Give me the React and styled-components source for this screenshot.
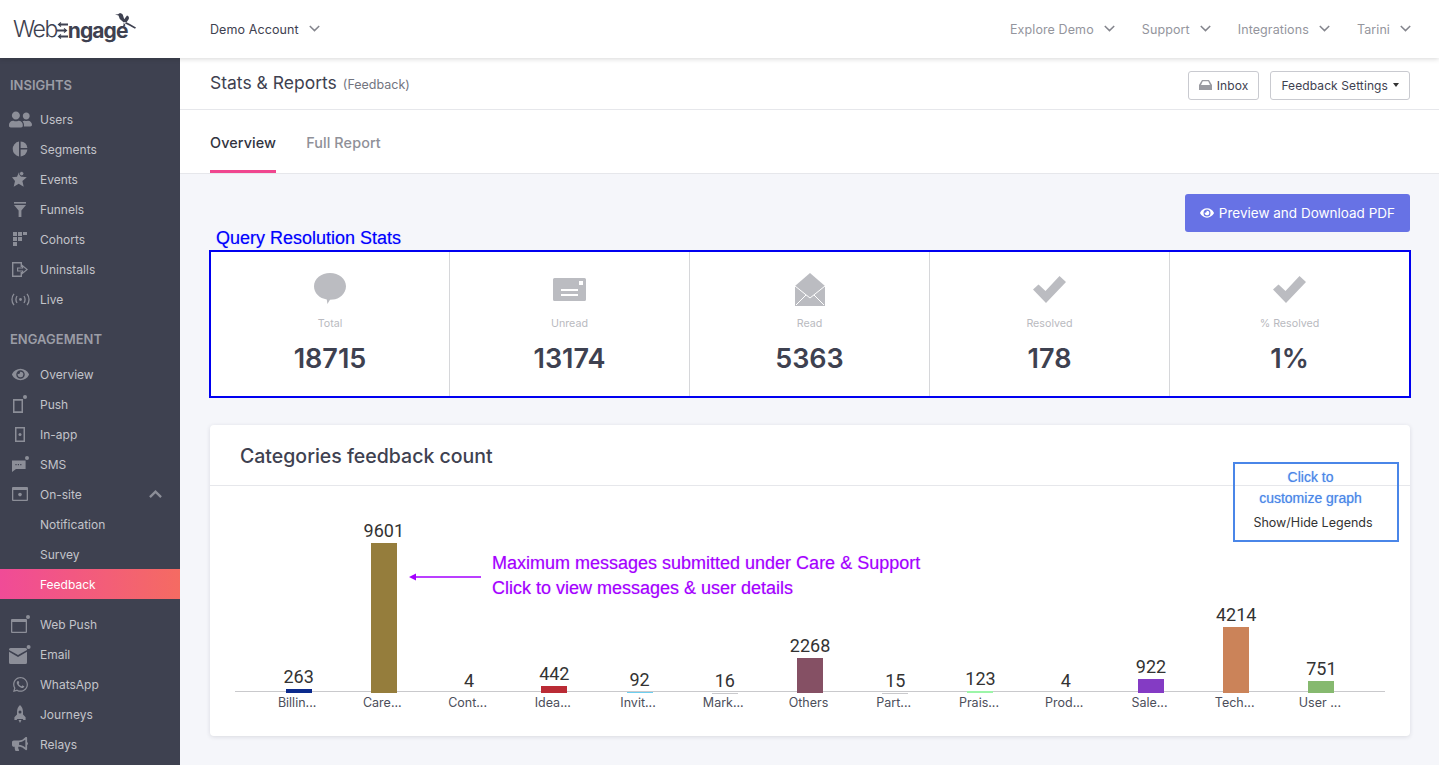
import React from 'react';
import styled, { createGlobalStyle } from 'styled-components';
import { FaUserFriends, FaEye, FaWhatsapp, FaBullhorn } from 'react-icons/fa';

const GlobalStyle = createGlobalStyle`
  html, body { margin: 0; padding: 0; height: 100%; overflow: hidden; }
  body { font-family: Inter, "Liberation Sans", sans-serif; background: #f5f6fa; color: #3e4150; }
  * { box-sizing: border-box; }
`;

const Page = styled.div`
  display: flex;
  flex-direction: column;
  height: 100vh;
`;

const TopBar = styled.header`
  display: flex;
  align-items: center;
  flex: 0 0 58px;
  padding-right: 28px;
  background: #fff;
  box-shadow: 0 1px 5px rgba(0, 0, 0, 0.16);
  position: relative;
  z-index: 2;
`;

const LogoBox = styled.div`
  display: flex;
  align-items: center;
  flex: 0 0 210px;
  height: 58px;
  padding-left: 13px;
  position: relative;
  color: #3e4150;
`;

const LogoLight = styled.span`
  font-size: 23px;
  font-weight: 300;
  letter-spacing: -1.5px;
`;

const LogoBold = styled.span`
  font-size: 21px;
  font-weight: 700;
  letter-spacing: -0.9px;
  margin-top: 2px;
`;

const LogoMark = styled.svg`
  margin: 3px 0 0 0;
`;

const Bird = styled.svg`
  position: absolute;
  left: 115px;
  top: 13px;
`;

const TopLink = styled.div`
  display: flex;
  align-items: center;
  gap: 10px;
  font-size: 12.5px;
  letter-spacing: 0.1px;
  color: ${p => (p.$muted ? '#94959d' : '#3e4150')};
  margin-left: ${p => p.$left};
`;

const Body = styled.div`
  display: flex;
  flex: 1;
  min-height: 0;
`;

const Sidebar = styled.nav`
  flex: 0 0 180px;
  background: #3e4150;
  overflow: hidden;
`;

const SectionTitle = styled.div`
  padding: ${p => p.$top}px 0 ${p => p.$bottom}px 10px;
  font-size: 13px;
  line-height: 18px;
  font-weight: 600;
  color: #9b9da6;
`;

const NavRow = styled.div`
  display: flex;
  align-items: center;
  height: 30px;
  padding-right: 18px;
  margin-top: ${p => (p.$spaced ? '10px' : '0')};
  font-size: 12px;
  color: ${p => (p.$active ? '#fff' : '#c3c4ca')};
  background: ${p => (p.$active ? 'linear-gradient(90deg, #f04b97, #f56b62)' : 'transparent')};
`;

const IconSlot = styled.span`
  display: flex;
  align-items: center;
  justify-content: center;
  flex: 0 0 40px;
  color: #8c8e98;
`;

const RowArrow = styled.span`
  display: flex;
  margin-left: auto;
  color: #8c8e98;
`;

const Main = styled.main`
  flex: 1;
  min-width: 0;
  display: flex;
  flex-direction: column;
`;

const TitleBar = styled.div`
  display: flex;
  align-items: center;
  justify-content: space-between;
  height: 52px;
  padding: 0 29px 0 30px;
  background: #fff;
  border-bottom: 1px solid #e6e7eb;
`;

const Title = styled.h1`
  margin: 0 0 3px;
  font-size: 17.5px;
  font-weight: 400;
  color: #3e4150;
`;

const TitleNote = styled.span`
  margin-left: 6px;
  font-size: 12.5px;
  color: #73757f;
`;

const ButtonGroup = styled.div`
  display: flex;
  gap: 11px;
  margin-top: 3px;
`;

const OutlineButton = styled.button`
  display: flex;
  align-items: center;
  gap: 5px;
  height: 29px;
  padding: 0 10px;
  background: #fff;
  border: 1px solid #c9cad0;
  border-radius: 3px;
  font: 12px Inter, sans-serif;
  letter-spacing: 0.1px;
  color: #3e4150;
`;

const Tabs = styled.div`
  display: flex;
  gap: 30px;
  height: 64px;
  padding-left: 30px;
  background: #fff;
  border-bottom: 1px solid #e6e7eb;
`;

const Tab = styled.div`
  display: flex;
  align-items: center;
  height: 63px;
  padding-top: 5px;
  font-size: 14.4px;
  font-weight: 500;
  letter-spacing: 0.1px;
  color: ${p => (p.$active ? '#32343f' : '#8f9098')};
  border-bottom: 3px solid ${p => (p.$active ? '#f0468f' : 'transparent')};
`;

const Content = styled.div`
  padding: 20px 29px 0 30px;
`;

const StatsHead = styled.div`
  display: flex;
  justify-content: space-between;
  height: 56px;
`;

const StatsNote = styled.div`
  align-self: flex-end;
  padding-left: 6px;
  font: 18px/23px "Liberation Sans", Arial, sans-serif;
  color: #0000ff;
  text-shadow: 0 0 1px rgba(0, 0, 255, 0.35);
`;

const PrimaryButton = styled.button`
  display: flex;
  align-items: center;
  gap: 5px;
  height: 38px;
  padding: 0 15px;
  background: #6772e5;
  border: 0;
  border-radius: 3px;
  font: 13.5px Inter, sans-serif;
  color: #fff;
`;

const StatsBox = styled.div`
  display: grid;
  grid-template-columns: 238px repeat(4, 240px);
  height: 148px;
  margin: 0 -1px;
  background: #fff;
  border: 2px solid #0000f0;
`;

const StatCell = styled.div`
  display: flex;
  flex-direction: column;
  align-items: center;
  border-left: ${p => (p.$first ? '0' : '1px solid #d6d7da')};
`;

const StatIcon = styled.div`
  display: flex;
  align-items: center;
  justify-content: center;
  height: 36px;
  margin-top: 19px;
  color: #bbbcc1;
`;

const StatLabel = styled.div`
  margin-top: 10px;
  font-size: 10.7px;
  line-height: 14px;
  color: #b9bac0;
`;

const StatValue = styled.div`
  margin-top: 12px;
  font-size: 27px;
  line-height: 32px;
  font-weight: 600;
  color: #3e4150;
`;

const ChartCard = styled.section`
  position: relative;
  margin-top: 27px;
  padding-bottom: 23px;
  background: #fff;
  border-radius: 4px;
  box-shadow: 0 1px 4px rgba(50, 50, 70, 0.14);
`;

const ChartTitle = styled.h2`
  margin: 0;
  height: 61px;
  padding: 2px 30px 0;
  display: flex;
  align-items: center;
  font-size: 19.5px;
  font-weight: 500;
  color: #3e4150;
  border-bottom: 1px solid #e6e7eb;
`;

const Plot = styled.div`
  position: relative;
  display: flex;
  align-items: flex-end;
  height: 227px;
  margin: 0 46px;
  &::after {
    content: '';
    position: absolute;
    left: -21px;
    right: -21px;
    bottom: 21px;
    height: 1px;
    background: #c9c9cc;
  }
`;

const Column = styled.div`
  flex: 1;
  min-width: 0;
  display: flex;
  flex-direction: column;
  align-items: center;
`;

const BarValue = styled.div`
  margin-bottom: 1px;
  font: 18px/22px Roboto, "Liberation Sans", Arial, sans-serif;
  color: #333;
`;

const Bar = styled.div`
  position: relative;
  z-index: 1;
  width: 26px;
  background: ${p => p.$color};
`;

const BarLabel = styled.div`
  height: 20px;
  padding-right: 3px;
  font-size: 12.5px;
  line-height: 20px;
  color: #4c4e5a;
  white-space: nowrap;
`;

const ArrowNote = styled.svg`
  position: absolute;
  left: 199px;
  top: 147px;
`;

const PurpleNote = styled.div`
  position: absolute;
  left: 282px;
  top: 126px;
  font: 18px/25px "Liberation Sans", Arial, sans-serif;
  color: #a400ff;
  text-shadow: 0 0 1px rgba(164, 0, 255, 0.4);
  white-space: nowrap;
`;

const GraphNote = styled.div`
  position: absolute;
  left: 1023px;
  top: 37px;
  width: 166px;
  height: 80px;
  padding-top: 3px;
  display: flex;
  flex-direction: column;
  align-items: center;
  border: 2px solid #4a86e8;
`;

const GraphNoteLine = styled.div`
  padding-right: 11px;
  font: 14px/21px "Liberation Sans", Arial, sans-serif;
  color: #4a86e8;
  text-shadow: 0 0 1px rgba(74, 134, 232, 0.6);
`;

const LegendToggle = styled.div`
  margin-top: 4px;
  padding-right: 6px;
  font-size: 12.5px;
  line-height: 20px;
  color: #333;
`;

const Chevron = ({ color = '#84858d', up, size = 11 }) => (
  <svg width={size} height={size * 0.64} viewBox="0 0 11 7" fill="none" stroke={color} strokeWidth={up ? 2 : 1.5}>
    <path d={up ? 'M.8 6 5.5 1.4 10.2 6' : 'M.8 1 5.5 5.6 10.2 1'} />
  </svg>
);

const Ico = ({ w, h, children }) => (
  <svg width={w} height={h} viewBox={`0 0 ${w} ${h}`} fill="currentColor">{children}</svg>
);

const icons = {
  users: <FaUserFriends size={23} />,
  segments: (
    <Ico w={16} h={16}>
      <path d="M7 .6v14.8A7.5 7.5 0 0 1 7 .6Z" />
      <path d="M8.6.6A7.4 7.4 0 0 1 15.4 7H8.6Z" />
      <path d="M8.6 8.6h6.8a7.4 7.4 0 0 1-6.8 6.8Z" />
    </Ico>
  ),
  events: (
    <Ico w={16} h={16}>
      <path d="M6.8 1.6 8.8 5.6l6 .6-4.4 3.9 1.3 5.6-5-3-5 3 1.3-5.6L0 6.2l5-.5Z" />
      <circle cx="9.6" cy="2.6" r="2.2" stroke="#3e4150" strokeWidth=".8" />
    </Ico>
  ),
  funnels: (
    <Ico w={14} h={15}>
      <path d="M1 0h12v1.6H1Z" />
      <path d="M1 3h12L8.4 8.6V15H5.6V8.6Z" />
    </Ico>
  ),
  cohorts: (
    <Ico w={15} h={15}>
      <path d="M0 0h4v4H0ZM5 0h4v4H5ZM10 0h4v3h-4ZM0 5h4v4H0ZM5 5h4v4H5ZM0 10h4v4H0Z" />
    </Ico>
  ),
  uninstalls: (
    <Ico w={16} h={15}>
      <path fillRule="evenodd" d="M0 0h10v5H8.6V1.4H1.4v12.2h7.2V10H10v5H0Z" />
      <path d="M10 2.6 16 7.5 10 12.4V9.6H5V5.4h5Zm1.2 2.6v1.4H6.2v1.8h5v1.6l3-2.5-3-2.5Z" fillRule="evenodd" />
    </Ico>
  ),
  live: (
    <svg width="19" height="13" viewBox="0 0 19 13" fill="none" stroke="currentColor" strokeWidth="1.3">
      <path d="M3 .8C.3 4 .3 9 3 12.2M6 3C4.8 5 4.8 8 6 10M13 3c1.2 2 1.2 5 0 7M16 .8c2.7 3.2 2.7 8.2 0 11.4" />
      <circle cx="9.5" cy="6.5" r="1.4" fill="currentColor" stroke="none" />
    </svg>
  ),
  overview: <FaEye size={17} />,
  push: (
    <Ico w={16} h={18}>
      <path fillRule="evenodd" d="M1 4h10v14H1Zm1.5 1.7v10.6h7V5.7Z" />
      <circle cx="13" cy="2" r="2" />
    </Ico>
  ),
  inapp: (
    <Ico w={10} h={15}>
      <path fillRule="evenodd" d="M0 0h10v15H0Zm1.5 1.6v11.8h7V1.6Z" />
      <circle cx="5" cy="7.5" r="1.5" />
    </Ico>
  ),
  sms: (
    <Ico w={17} h={16}>
      <path fillRule="evenodd" d="M0 4.5h13.6v8.6H4L0 16ZM3.4 8h1.2v1.2H3.4Zm2.4 0H7v1.2H5.8Zm2.4 0h1.2v1.2H8.2Z" />
      <circle cx="15" cy="2" r="2" />
    </Ico>
  ),
  onsite: (
    <Ico w={16} h={14}>
      <path fillRule="evenodd" d="M1 0h14a1 1 0 0 1 1 1v12a1 1 0 0 1-1 1H1a1 1 0 0 1-1-1V1a1 1 0 0 1 1-1Zm.3 3v9.7h13.4V3Z" />
      <circle cx="8" cy="7.6" r="1.8" />
    </Ico>
  ),
  webpush: (
    <Ico w={19} h={18}>
      <path fillRule="evenodd" d="M1 4h14a1 1 0 0 1 1 1v12a1 1 0 0 1-1 1H1a1 1 0 0 1-1-1V5a1 1 0 0 1 1-1Zm.3 3v9.7h13.4V7Z" />
      <circle cx="17" cy="2" r="2" />
    </Ico>
  ),
  email: (
    <svg width="22" height="19" viewBox="0 0 22 19" fill="currentColor">
      <path d="M1.5 3h15A1.5 1.5 0 0 1 18 4.5v.4L9 10 0 4.900v-.4A1.5 1.5 0 0 1 1.5 3Z" />
      <path d="M0 6.800 9 12l9-5.200v10.700a1.5 1.5 0 0 1-1.500 1.500h-15A1.500 1.500 0 0 1 0 17.500Z" />
      <circle cx="19.6" cy="2" r="2" />
    </svg>
  ),
  whatsapp: <FaWhatsapp size={17} />,
  journeys: (
    <Ico w={12} h={18}>
      <path fillRule="evenodd" d="M6 0c2 1.600 3 4.200 3 7.200v2.400l2.600 2.600V15H9.300l-.6-1H3.300l-.6 1H.4v-2.800L3 9.600V7.200C3 4.200 4 1.600 6 0Zm0 5.400a1.500 1.500 0 1 0 0 3 1.500 1.500 0 0 0 0-3Z" />
      <path d="M4.500 15h3L6 18Z" />
    </Ico>
  ),
  relays: <FaBullhorn size={16} />
};

const insights = [
  ['users', 'Users'],
  ['segments', 'Segments'],
  ['events', 'Events'],
  ['funnels', 'Funnels'],
  ['cohorts', 'Cohorts'],
  ['uninstalls', 'Uninstalls'],
  ['live', 'Live']
];

const engagement = [
  ['overview', 'Overview'],
  ['push', 'Push'],
  ['inapp', 'In-app'],
  ['sms', 'SMS']
];

const channels = [
  ['webpush', 'Web Push'],
  ['email', 'Email'],
  ['whatsapp', 'WhatsApp'],
  ['journeys', 'Journeys'],
  ['relays', 'Relays']
];

function CheckMark() {
  return (
    <svg width="33" height="27" viewBox="0 0 33 27" fill="currentColor">
      <path d="M0 13.500 5.500 8.500 12.500 15 26.500 0 33 6 13 27Z" />
    </svg>
  );
}

const stats = [
  {
    label: 'Total',
    value: '18715',
    icon: (
      <svg width="32" height="32" viewBox="0 0 32 32" fill="currentColor">
        <path d="M16 0c8.800 0 16 5.800 16 13.200S24.800 26.400 19 26.600l-3 .1-2.600 4.300-.6-4.600C5.600 25.400 0 20 0 13.200 0 5.800 7.200 0 16 0Z" />
      </svg>
    )
  },
  {
    label: 'Unread',
    value: '13174',
    icon: (
      <svg width="33" height="23" viewBox="0 0 33 23" fill="currentColor">
        <path fillRule="evenodd" d="M1.500 0h30A1.500 1.500 0 0 1 33 1.500v20a1.500 1.500 0 0 1-1.500 1.500h-30A1.500 1.500 0 0 1 0 21.500v-20A1.500 1.500 0 0 1 1.500 0ZM26 3v4h4V3ZM8 11v2h17v-2Zm0 5v2h17v-2Z" />
      </svg>
    )
  },
  {
    label: 'Read',
    value: '5363',
    icon: (
      <svg width="30" height="33" viewBox="0 0 30 33">
        <path d="M15 0 30 13V33H0V13Z" fill="currentColor" />
        <path d="M0 13 15 25 30 13M1 32 11 22M29 32 19 22" fill="none" stroke="#fff" strokeWidth="1" />
      </svg>
    )
  },
  { label: 'Resolved', value: '178', icon: <CheckMark /> },
  { label: '% Resolved', value: '1%', icon: <CheckMark /> }
];

const bars = [
  ['Billin...', 263, '#0b2a8c'],
  ['Care...', 9601, '#957d3c'],
  ['Cont...', 4, '#c9c9cc'],
  ['Idea...', 442, '#ba2b35'],
  ['Invit...', 92, '#6dcff0'],
  ['Mark...', 16, '#c9c9cc'],
  ['Others', 2268, '#855064'],
  ['Part...', 15, '#c9c9cc'],
  ['Prais...', 123, '#9cf5a8'],
  ['Prod...', 4, '#c9c9cc'],
  ['Sale...', 922, '#843bc4'],
  ['Tech...', 4214, '#cb8359'],
  ['User ...', 751, '#86b96f']
];

const topLinks = ['Explore Demo', 'Support', 'Integrations', 'Tarini'];

const Logo = () => (
  <LogoBox>
    <LogoLight>Web</LogoLight>
    <LogoMark width="11" height="17" viewBox="0 0 11 17" fill="none" stroke="#3e4150" strokeWidth="1.8">
      <path d="M2 2.500h9M0 8.500h9M2 14.500h9" />
      <path d="M4 .5 1.500 2.500 4 4.500M7 6.500l2.500 2L7 10.500M4 12.500l-2.500 2 2.500 2" strokeWidth="1.200" />
    </LogoMark>
    <LogoBold>ngage</LogoBold>
    <Bird width="21" height="18" viewBox="0 0 21 18" fill="#3e4150">
      <path d="M0 1.500 3 1.200 5 0c2 .3 3 1.500 3.200 3l1 3.200L12 2.500c1.600.4 2.300 1.800 1.800 3.500l-2 3-3.300.3L4.800 6 3.500 2.500Z" />
      <path d="M11 9 15 11l6 3.600-1 1.200-5.400-3-4.600-2.300Z" />
      <path d="M8.500 9.500c.6 2-.3 4-2.400 5l-1.800.8 3.400-.1L10.500 12Z" />
    </Bird>
  </LogoBox>
);

const SideItem = ({ icon, label, spaced }) => (
  <NavRow $spaced={spaced}>
    <IconSlot>{icons[icon]}</IconSlot>
    {label}
  </NavRow>
);

export default function App() {
  return (
    <Page>
      <GlobalStyle />
      <TopBar>
        <Logo />
        <TopLink $left="0">Demo Account <Chevron /></TopLink>
        {topLinks.map((l, i) => (
          <TopLink key={l} $muted $left={i === 0 ? 'auto' : '27px'}>{l} <Chevron /></TopLink>
        ))}
      </TopBar>
      <Body>
        <Sidebar>
          <SectionTitle $top={18} $bottom={10}>INSIGHTS</SectionTitle>
          {insights.map(([icon, label]) => <SideItem key={label} icon={icon} label={label} />)}
          <SectionTitle $top={16} $bottom={11}>ENGAGEMENT</SectionTitle>
          {engagement.map(([icon, label]) => <SideItem key={label} icon={icon} label={label} />)}
          <NavRow>
            <IconSlot>{icons.onsite}</IconSlot>
            On-site
            <RowArrow><Chevron up size={13} color="#8c8e98" /></RowArrow>
          </NavRow>
          <NavRow><IconSlot />Notification</NavRow>
          <NavRow><IconSlot />Survey</NavRow>
          <NavRow $active><IconSlot />Feedback</NavRow>
          {channels.map(([icon, label], i) => (
            <SideItem key={label} icon={icon} label={label} spaced={i === 0} />
          ))}
        </Sidebar>
        <Main>
          <TitleBar>
            <Title>Stats &amp; Reports<TitleNote>(Feedback)</TitleNote></Title>
            <ButtonGroup>
              <OutlineButton>
                <svg width="13" height="10" viewBox="0 0 13 10" fill="#9a9ba1">
                  <path d="M3 0h7l3 5v5H0V5Zm.8 1.300L2 5h9L9.200 1.300Z" fillRule="evenodd" />
                </svg>
                Inbox
              </OutlineButton>
              <OutlineButton>
                Feedback Settings
                <svg width="6" height="4" viewBox="0 0 6 4" fill="#333"><path d="M0 0h6L3 4Z" /></svg>
              </OutlineButton>
            </ButtonGroup>
          </TitleBar>
          <Tabs>
            <Tab $active>Overview</Tab>
            <Tab>Full Report</Tab>
          </Tabs>
          <Content>
            <StatsHead>
              <StatsNote>Query Resolution Stats</StatsNote>
              <PrimaryButton><FaEye size={14} />Preview and Download PDF</PrimaryButton>
            </StatsHead>
            <StatsBox>
              {stats.map((s, i) => (
                <StatCell key={s.label} $first={i === 0}>
                  <StatIcon>{s.icon}</StatIcon>
                  <StatLabel>{s.label}</StatLabel>
                  <StatValue>{s.value}</StatValue>
                </StatCell>
              ))}
            </StatsBox>
            <ChartCard>
              <ChartTitle>Categories feedback count</ChartTitle>
              <Plot>
                {bars.map(([label, value, color]) => (
                  <Column key={label}>
                    <BarValue>{value}</BarValue>
                    <Bar $color={color} style={{ height: value * 150 / 9601 }} />
                    <BarLabel>{label}</BarLabel>
                  </Column>
                ))}
              </Plot>
              <ArrowNote width="73" height="10" viewBox="0 0 73 10">
                <path d="M0 5 7 1.500v2.700h65v1.600H7v2.700Z" fill="#a400ff" />
              </ArrowNote>
              <PurpleNote>
                Maximum messages submitted under Care &amp; Support<br />
                Click to view messages &amp; user details
              </PurpleNote>
              <GraphNote>
                <GraphNoteLine>Click to</GraphNoteLine>
                <GraphNoteLine>customize graph</GraphNoteLine>
                <LegendToggle>Show/Hide Legends</LegendToggle>
              </GraphNote>
            </ChartCard>
          </Content>
        </Main>
      </Body>
    </Page>
  );
}
